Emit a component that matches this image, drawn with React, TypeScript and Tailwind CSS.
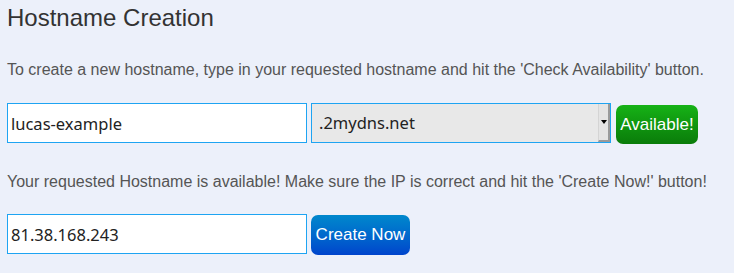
function App() {
  return (
    <div className="min-h-screen w-screen bg-[#ecf0fa] px-[7px] pt-[4px] font-['Liberation_Sans',Arial,sans-serif]">
      <h1 className="text-[24px] leading-[28px] text-[#333333]">Hostname Creation</h1>

      <p className="mt-[28px] text-[16px] leading-[20px] text-[#555555]">
        To create a new hostname, type in your requested hostname and hit the 'Check Availability' button.
      </p>

      <div className="mt-[23px] flex items-start gap-[4px]">
        <input
          className="h-[40px] w-[300px] border border-[#1ea4f2] bg-white px-[3px] font-['Noto_Sans',sans-serif] text-[16.5px] text-[#222222] outline-none"
          defaultValue="lucas-example"
        />
        <div className="relative h-[40px] w-[300px] border border-[#1ea4f2] bg-[#e8e8e8]">
          <span className="absolute left-[7px] top-[8px] font-['Noto_Sans',sans-serif] text-[16.5px] leading-[22px] text-[#222222]">
            .2mydns.net
          </span>
          <span className="absolute right-0 top-0 flex h-[38px] w-[12px] items-center justify-center border-b-[2px] border-r-[2px] border-b-[#9a9a9a] border-r-[#9a9a9a] border-l border-l-[#d4d4d4] bg-[#e4e4e4]">
            <span className="h-0 w-0 border-x-[3px] border-t-[4px] border-x-transparent border-t-black" />
          </span>
        </div>
        <button className="mt-[2px] ml-[1px] h-[39px] w-[82px] rounded-[7px] bg-gradient-to-b from-[#16b216] to-[#0a7c0a] text-[17px] text-white">
          Available!
        </button>
      </div>

      <p className="mt-[28px] text-[16px] leading-[20px] text-[#555555]">
        Your requested Hostname is available! Make sure the IP is correct and hit the 'Create Now!' button!
      </p>

      <div className="mt-[22px] flex items-start gap-[4px]">
        <input
          className="h-[40px] w-[300px] border border-[#1ea4f2] bg-white px-[3px] font-['Noto_Sans',sans-serif] text-[16.5px] text-[#222222] outline-none"
          defaultValue="81.38.168.243"
        />
        <button className="mt-[1px] h-[40px] w-[99px] rounded-[7px] bg-gradient-to-b from-[#0088cc] to-[#0044cc] text-[17px] text-white">
          Create Now
        </button>
      </div>
    </div>
  );
}

export default App;
